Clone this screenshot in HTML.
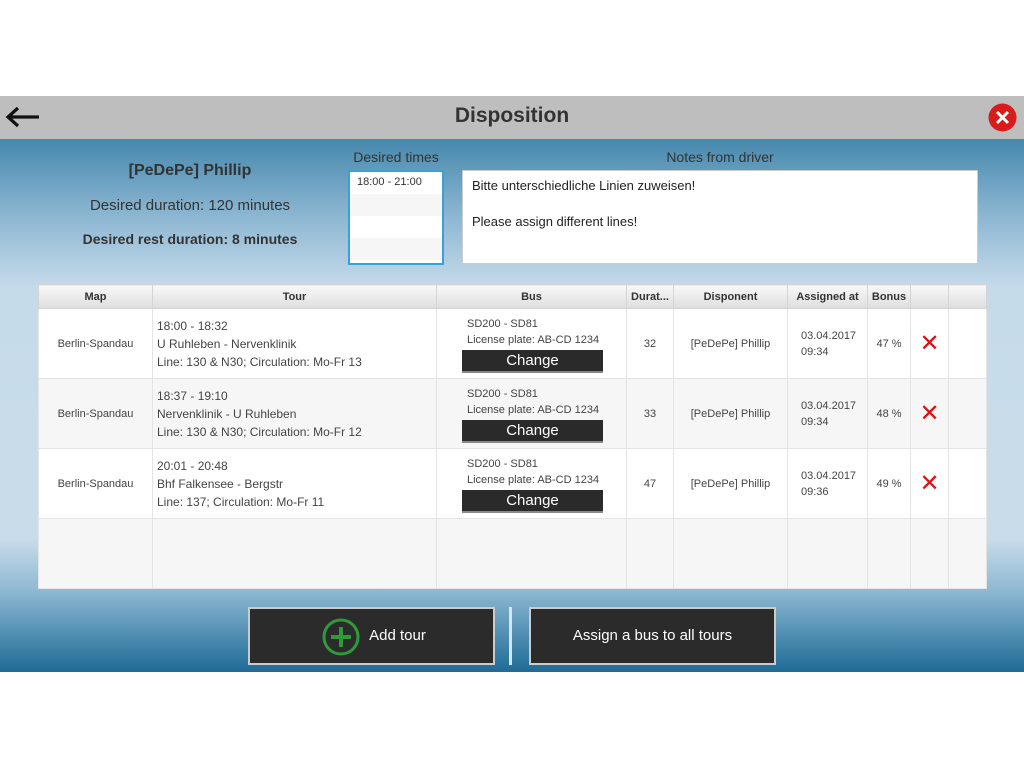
<!DOCTYPE html>
<html><head><meta charset="utf-8"><style>
*{margin:0;padding:0;box-sizing:border-box}
body{width:1024px;height:768px;background:#fff;position:relative;font-family:"Segoe UI","Liberation Sans",sans-serif;overflow:hidden;color:#333}
.hdr{position:absolute;left:0;top:96px;width:1024px;height:43px;background:#bebebe}
.hdr h1{position:absolute;left:0;right:0;top:8px;text-align:center;font-size:21px;font-weight:bold;color:#333}
.main{position:absolute;left:0;top:139px;width:1024px;height:533px;background:linear-gradient(#4688ad 0%,#8fb8d3 15%,#c6dbea 28%,#c9dcea 75%,#8cb7d2 85%,#1d6b96 100%)}
.a{position:absolute}
table{position:absolute;left:38px;top:284px;width:948px;border-collapse:collapse;font-size:12px;background:#fff;table-layout:fixed}
th{height:24px;background:linear-gradient(#f8f8f8,#dedede);font-size:11px;font-weight:bold;color:#333;border:1px solid #d4d4d4;padding:0}
td{height:70px;border:1px solid #e4e4e4;vertical-align:middle;color:#444;padding:0;line-height:16px}
tr.alt td{background:#f6f6f6}
.c{text-align:center}
.x{color:#d11;font-size:24px;line-height:24px}
.chg{display:block;margin:2px 0 0 25px;width:141px;height:23px;background:#2a2a2a;color:#fff;font-size:15px;text-align:center;line-height:21px;border-bottom:2px solid #888}
.btn{position:absolute;top:607px;height:58px;background:#2b2b2b;border:2px solid #ccc;color:#fff;font-size:15px;text-align:center;line-height:54px}
</style></head><body>
<div class="hdr"><h1>Disposition</h1>
<svg class="a" style="left:5px;top:10px" width="36" height="22"><path d="M34 11H4M13 2L3 11l10 9" stroke="#111" stroke-width="3.2" fill="none"/></svg>
<svg class="a" style="left:988px;top:7px" width="29" height="29"><circle cx="14.5" cy="14.5" r="14" fill="#d81c1c"/><path d="M9 9l11 11M20 9L9 20" stroke="#fff" stroke-width="3"/></svg>
</div>
<div class="main"></div>
<div class="a" style="left:60px;top:162px;width:260px;text-align:center;font-size:16px;font-weight:bold;color:#333">[PeDePe] Phillip</div>
<div class="a" style="left:60px;top:197px;width:260px;text-align:center;font-size:15px;color:#333">Desired duration: 120 minutes</div>
<div class="a" style="left:60px;top:231px;width:260px;text-align:center;font-size:14px;font-weight:bold;color:#333">Desired rest duration: 8 minutes</div>
<div class="a" style="left:348px;top:149px;width:96px;text-align:center;font-size:14px;color:#333">Desired times</div>
<div class="a" style="left:348px;top:170px;width:96px;height:95px;background:#fff;border:2px solid #3ba0d8;font-size:11px">
<div style="height:22px;padding:4px 7px">18:00 - 21:00</div><div style="height:22px;background:#f6f6f6"></div><div style="height:22px"></div><div style="height:22px;background:#f6f6f6"></div></div>
<div class="a" style="left:462px;top:149px;width:516px;text-align:center;font-size:14px;color:#333">Notes from driver</div>
<div class="a" style="left:462px;top:170px;width:516px;height:94px;background:#fff;border:1px solid #ccc;font-size:13px;padding:6px 9px;line-height:18px;color:#222">Bitte unterschiedliche Linien zuweisen!<br><br>Please assign different lines!</div>
<table>
<colgroup><col style="width:114px"><col style="width:284px"><col style="width:190px"><col style="width:47px"><col style="width:114px"><col style="width:80px"><col style="width:43px"><col style="width:38px"><col style="width:38px"></colgroup>
<tr><th>Map</th><th>Tour</th><th>Bus</th><th>Durat...</th><th>Disponent</th><th>Assigned at</th><th>Bonus</th><th></th><th></th></tr>
<tr><td class="c" style="font-size:11px">Berlin-Spandau</td><td style="padding-left:4px;line-height:18px">18:00 - 18:32<br>U Ruhleben - Nervenklinik<br>Line: 130 &amp; N30; Circulation: Mo-Fr 13</td><td style="font-size:11px;padding-top:2px"><div style="padding-left:30px">SD200 - SD81<br>License plate: AB-CD 1234</div><span class="chg">Change</span></td><td class="c" style="font-size:11px">32</td><td class="c" style="font-size:11px">[PeDePe] Phillip</td><td style="font-size:11px;padding-left:13px">03.04.2017<br>09:34</td><td class="c" style="font-size:11px">47 %</td><td class="c x">✕</td><td></td></tr>
<tr class="alt"><td class="c" style="font-size:11px">Berlin-Spandau</td><td style="padding-left:4px;line-height:18px">18:37 - 19:10<br>Nervenklinik - U Ruhleben<br>Line: 130 &amp; N30; Circulation: Mo-Fr 12</td><td style="font-size:11px;padding-top:2px"><div style="padding-left:30px">SD200 - SD81<br>License plate: AB-CD 1234</div><span class="chg">Change</span></td><td class="c" style="font-size:11px">33</td><td class="c" style="font-size:11px">[PeDePe] Phillip</td><td style="font-size:11px;padding-left:13px">03.04.2017<br>09:34</td><td class="c" style="font-size:11px">48 %</td><td class="c x">✕</td><td></td></tr>
<tr><td class="c" style="font-size:11px">Berlin-Spandau</td><td style="padding-left:4px;line-height:18px">20:01 - 20:48<br>Bhf Falkensee - Bergstr<br>Line: 137; Circulation: Mo-Fr 11</td><td style="font-size:11px;padding-top:2px"><div style="padding-left:30px">SD200 - SD81<br>License plate: AB-CD 1234</div><span class="chg">Change</span></td><td class="c" style="font-size:11px">47</td><td class="c" style="font-size:11px">[PeDePe] Phillip</td><td style="font-size:11px;padding-left:13px">03.04.2017<br>09:36</td><td class="c" style="font-size:11px">49 %</td><td class="c x">✕</td><td></td></tr>
<tr class="alt"><td style="height:64px"></td><td></td><td></td><td></td><td></td><td></td><td></td><td></td><td></td></tr>
</table>
<div class="btn" style="left:248px;width:247px"><svg style="position:absolute;left:72px;top:9px" width="38" height="38"><circle cx="19" cy="19" r="17" stroke="#2e9a3a" stroke-width="3" fill="none"/><path d="M19 9v20M9 19h20" stroke="#2e9a3a" stroke-width="4"/></svg><span style="padding-left:52px">Add tour</span></div>
<div class="a" style="left:509px;top:607px;width:3px;height:58px;background:#d6e6f0"></div>
<div class="btn" style="left:529px;width:247px">Assign a bus to all tours</div>
</body></html>
